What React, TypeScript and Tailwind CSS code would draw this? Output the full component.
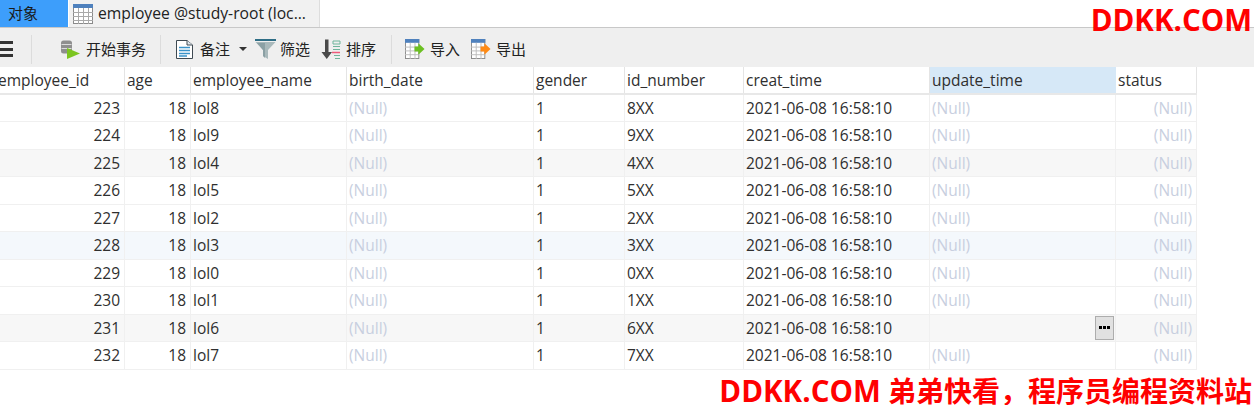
const FONT = { fontFamily: '"Open Sans", "Noto Sans CJK SC", sans-serif' };

const rows = [
  ["223", "lol8", "8XX", ""],
  ["224", "lol9", "9XX", ""],
  ["225", "lol4", "4XX", "alt"],
  ["226", "lol5", "5XX", ""],
  ["227", "lol2", "2XX", ""],
  ["228", "lol3", "3XX", "blue"],
  ["229", "lol0", "0XX", ""],
  ["230", "lol1", "1XX", ""],
  ["231", "lol6", "6XX", "edit"],
  ["232", "lol7", "7XX", ""],
];

const GRID = "grid grid-cols-[125px_66px_156px_187px_91px_119px_186px_186px_81px] w-[1197px]";

function Sep() {
  return <div className="w-px h-[29px] bg-[#dcdcdc]" />;
}

function TableIcon() {
  return (
    <svg width="20" height="20" viewBox="0 0 20 20">
      <rect x="0.5" y="0.5" width="19" height="19" fill="#fff" stroke="#8a8a8a" />
      <rect x="0" y="0" width="20" height="4" fill="#4f81bd" />
      <path d="M0 8.5H20M0 12.5H20M0 16.5H20M5.5 4V20M10.5 4V20M15.5 4V20" stroke="#a9a9a9" />
    </svg>
  );
}

function TxIcon() {
  return (
    <svg width="20" height="19" viewBox="0 0 20 19">
      <rect x="1" y="0.500" width="11" height="13" rx="2.500" fill="#8f8f8f" />
      <path d="M1.500 4.500H11.500M1.500 8.500H11.500" stroke="#dcdcdc" fill="none" />
      <path d="M7 8L20 13.500L7 19Z" fill="#7cc520" />
    </svg>
  );
}

function NoteIcon() {
  return (
    <svg width="17" height="19" viewBox="0 0 17 19">
      <path d="M0.500 0.500H11L16.500 5V18.500H0.500Z" fill="#fff" stroke="#3f4a52" />
      <path d="M11 0.500V5H16.500" fill="#dfe7ee" stroke="#3f4a52" />
      <path d="M3 7.500H14M3 10.500H14M3 13.500H14M3 16H11" stroke="#3a93c9" strokeWidth="1.300" />
    </svg>
  );
}

function FilterIcon() {
  return (
    <svg width="21" height="20" viewBox="0 0 21 20">
      <rect x="0" y="0" width="21" height="2" fill="#2f6e86" />
      <path d="M0.500 3H20.500L13 11V20L8 17V11Z" fill="#a9b9bb" />
      <path d="M8 11L2 4H10V19L8 17Z" fill="#8ba0a4" />
    </svg>
  );
}

function SortIcon() {
  return (
    <svg width="20" height="21" viewBox="0 0 20 21">
      <path d="M4 0.500H7.500V13H11L5.750 20L0.500 13H4Z" fill="#4a4a4a" />
      <path d="M12 2H19M12 2V5H19V2" stroke="#6fb59b" fill="none" />
      <path d="M12 7.500H19M12 10.500H19" stroke="#6fb59b" strokeWidth="1.200" />
      <path d="M11 13.500H19" stroke="#ef5a7a" strokeWidth="1.500" />
      <path d="M13 16.500H19M14 19.500H19" stroke="#6fb59b" strokeWidth="1.200" />
    </svg>
  );
}

function TransferIcon({ color }: { color: string }) {
  return (
    <svg width="20" height="20" viewBox="0 0 21 21">
      <rect x="0.500" y="0.500" width="14" height="20" fill="#fff" stroke="#8a8a8a" />
      <rect x="0" y="0" width="15" height="4" fill="#4f81bd" />
      <path d="M0 8.500H15M0 12.500H15M0 16.500H15M5.500 4V21M10.500 4V21" stroke="#bdbdbd" />
      <path d="M10 8H14V4.500L20.500 10.500L14 16.500V13H10Z" fill={color} />
    </svg>
  );
}

function Null() {
  return <span className="text-[#c8cfe0]">(Null)</span>;
}

function Cell({ children, right, className = "" }: { children?: React.ReactNode; right?: boolean; className?: string }) {
  return (
    <div className={`border-r border-[#f0f0f0] pl-[2px] pr-[4px] flex items-center overflow-hidden whitespace-nowrap ${right ? "justify-end" : ""} ${className}`}>
      {children}
    </div>
  );
}

function Tool({ icon, label, className = "", labelClass = "ml-[5px]" }: { icon: React.ReactNode; label: string; className?: string; labelClass?: string }) {
  return (
    <div className={`flex items-center ${className}`}>
      {icon}
      <span className={`text-[15px] text-[#222] leading-none pt-[1px] ${labelClass}`}>{label}</span>
    </div>
  );
}

export default function App() {
  return (
    <div className="relative w-[1254px] h-[405px] bg-white overflow-hidden text-[15.5px] text-[#2f2f2f]" style={FONT}>
      <div className="flex h-[28px] border-b border-[#c8c8c8] bg-white">
        <div className="w-[68px] h-[27px] bg-[#3d9efb] pl-[8px] flex items-center text-[15px] text-[#1a1a1a]">对象</div>
        <div className="w-[251px] h-[27px] bg-[#f1f1f1] ml-[1px] pl-[4px] flex items-center gap-[5px] border-r border-[#dddddd]">
          <TableIcon />
          <span className="text-[15.7px] text-[#222] whitespace-nowrap">employee @study-root (loc...</span>
        </div>
      </div>

      <div className="h-[39px] bg-[#efefef] flex items-center pt-[3px]">
        <div className="w-[13px] h-[16px] flex flex-col justify-between">
          <div className="h-[3px] bg-[#333]" />
          <div className="h-[3px] bg-[#333]" />
          <div className="h-[3px] bg-[#333]" />
        </div>
        <div className="ml-[18px]"><Sep /></div>
        <Tool className="ml-[28px]" labelClass="ml-[6px]" icon={<TxIcon />} label="开始事务" />
        <div className="ml-[14px]"><Sep /></div>
        <Tool className="ml-[15px]" labelClass="ml-[7px]" icon={<NoteIcon />} label="备注" />
        <div className="ml-[9px] w-0 h-0 border-x-[4px] border-x-transparent border-t-[4px] border-t-[#333]" />
        <Tool className="ml-[8px]" labelClass="ml-[4px]" icon={<FilterIcon />} label="筛选" />
        <Tool className="ml-[11px]" labelClass="ml-[5px]" icon={<SortIcon />} label="排序" />
        <div className="ml-[15px]"><Sep /></div>
        <Tool className="ml-[13px]" icon={<TransferIcon color="#6cc022" />} label="导入" />
        <Tool className="ml-[11px]" icon={<TransferIcon color="#ff8a14" />} label="导出" />
      </div>

      <div className={`${GRID} h-[27.5px] bg-white border-b-[2px] border-[#e8e8e8]`}>
        <Cell className="!border-[#e4e4e4] !pl-0 pt-[2px]"><span className="ml-[-2px]">employee_id</span></Cell>
        <Cell className="!border-[#e4e4e4] pt-[2px]">age</Cell>
        <Cell className="!border-[#e4e4e4] pt-[2px]">employee_name</Cell>
        <Cell className="!border-[#e4e4e4] pt-[2px]">birth_date</Cell>
        <Cell className="!border-[#e4e4e4] pt-[2px]">gender</Cell>
        <Cell className="!border-[#e4e4e4] pt-[2px]">id_number</Cell>
        <Cell className="!border-[#e4e4e4] pt-[2px]">creat_time</Cell>
        <Cell className="bg-[#d6e8f7] !border-[#d6e8f7] pt-[2px]">update_time</Cell>
        <Cell className="!border-[#e4e4e4] pt-[2px]">status</Cell>
      </div>

      {rows.map(([id, name, num, kind]) => (
        <div
          key={id}
          className={`${GRID} h-[27.5px] border-b border-[#f0f0f0] ${
            kind === "alt" || kind === "edit" ? "bg-[#f7f7f7]" : kind === "blue" ? "bg-[#f4f8fc]" : "bg-white"
          }`}
        >
          <Cell right className="pt-[1px]">{id}</Cell>
          <Cell right className="pt-[1px]">18</Cell>
          <Cell className="pt-[1px]">{name}</Cell>
          <Cell className="pt-[1px]"><Null /></Cell>
          <Cell className="pt-[1px]">1</Cell>
          <Cell className="pt-[1px]">{num}</Cell>
          <Cell className="pt-[1px]">2021-06-08 16:58:10</Cell>
          {kind === "edit" ? (
            <Cell right className="!pr-[1px]">
              <div className="w-[19px] h-[24px] bg-[#e1e1e1] border border-[#adadad] flex items-center justify-center gap-[1px]">
                <i className="block w-[3px] h-[3px] bg-black" />
                <i className="block w-[3px] h-[3px] bg-black" />
                <i className="block w-[3px] h-[3px] bg-black" />
              </div>
            </Cell>
          ) : (
            <Cell className="pt-[1px]"><Null /></Cell>
          )}
          <Cell right className="pt-[1px]"><Null /></Cell>
        </div>
      ))}

      <div className="absolute right-[2px] top-[3px] text-[29.5px] leading-[34px] font-bold text-[#ff0000] whitespace-nowrap">
        DDKK.COM
      </div>
      <div className="absolute right-[2px] bottom-0 text-[28px] leading-[28px] font-bold text-[#ff0000] whitespace-nowrap">
        <span className="text-[29.5px]">DDKK.COM</span> 弟弟快看，程序员编程资料站
      </div>
    </div>
  );
}
